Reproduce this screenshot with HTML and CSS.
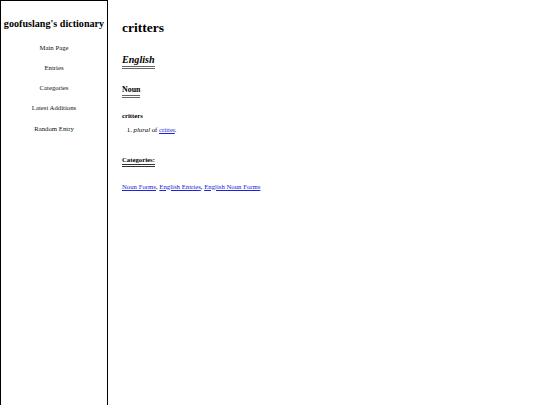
FILE: index.html
```html
<!DOCTYPE html>
<html lang="en">
<head>
<meta charset="utf-8">
<title>critters - goofuslang's dictionary</title>
<link rel="stylesheet" href="styles.css">
</head>
<body>
<div class="page">
  <aside class="sidebar">
    <h2 class="site-title">goofuslang's dictionary</h2>
    <nav class="nav">
      <a class="nav-link" href="#">Main Page</a>
      <a class="nav-link" href="#">Entries</a>
      <a class="nav-link" href="#">Categories</a>
      <a class="nav-link" href="#">Latest Additions</a>
      <a class="nav-link" href="#">Random Entry</a>
    </nav>
  </aside>
  <main class="main">
    <h1 class="title">critters</h1>
    <div class="sec"><h2 class="lang">English</h2></div>
    <div class="sec"><h3 class="pos">Noun</h3></div>
    <h4 class="headword">critters</h4>
    <ol class="defs">
      <li><i>plural</i> of <a href="#">critter</a>.</li>
    </ol>
    <div class="sec"><h4 class="cats-head">Categories:</h4></div>
    <p class="cats"><a href="#">Noun Forms</a>, <a href="#">English Entries</a>, <a href="#">English Noun Forms</a></p>
  </main>
</div>
</body>
</html>
```

FILE: styles.css
```css
html, body {
  margin: 0;
  padding: 0;
  background: #fff;
}
body {
  font-family: "Liberation Serif", "Times New Roman", serif;
  font-size: 6.75px;
  color: #000;
}
.page {
  display: flex;
  align-items: flex-start;
  height: 405px;
}
.sidebar {
  box-sizing: border-box;
  width: 108px;
  height: 405px;
  flex: none;
  border: 1px solid #000;
  border-right-width: 1.5px;
  border-bottom: none;
  padding-top: 16.8px;
  text-align: center;
}
.site-title {
  margin: 0;
  font-size: 10.125px;
  font-weight: bold;
  white-space: nowrap;
}
.nav {
  display: flex;
  flex-direction: column;
  margin-top: 9px;
}
.nav-link {
  display: block;
  height: 20.2px;
  line-height: 20.2px;
  color: #111;
  text-decoration: none;
}
.main {
  padding-left: 14px;
  flex: 1;
}
.title {
  font-size: 13.5px;
  margin: 20.2px 0 0;
}
.sec {
  display: block;
}
.lang, .pos, .cats-head {
  display: inline-block;
  padding-bottom: 1.3px;
  border-bottom: 3px double #666;
}
.lang {
  font-size: 10.125px;
  font-style: italic;
  margin: 17.8px 0 0;
}
.pos {
  font-size: 7.9px;
  margin: 15.3px 0 0;
}
.headword {
  font-size: 6.75px;
  margin: 14px 0 0;
}
.defs {
  margin: 7.4px 0 0;
  padding-left: 11.5px;
}
.cats-head {
  font-size: 6.75px;
  margin: 22.7px 0 0;
  border-bottom-color: #333;
}
.cats {
  margin: 15.3px 0 0;
}
a {
  color: #2222dd;
}
```
